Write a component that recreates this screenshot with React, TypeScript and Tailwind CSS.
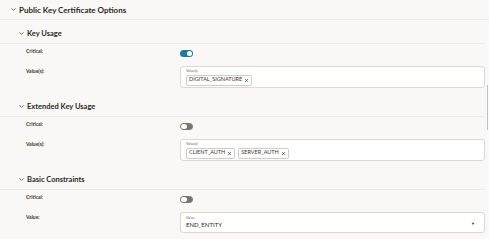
import { ChevronDown, X } from 'lucide-react'

function Toggle({ on }: { on: boolean }) {
  return on ? (
    <div className="w-[13px] h-[7px] rounded-full bg-[#227a9a] flex items-center justify-end pr-[1px]">
      <div className="w-[5px] h-[5px] rounded-full bg-white" />
    </div>
  ) : (
    <div className="w-[13px] h-[7px] rounded-full bg-[#7a7571] border border-[#7a7571] flex items-center">
      <div className="w-[6px] h-[5px] rounded-full bg-white" />
    </div>
  )
}

function Chip({ text }: { text: string }) {
  return (
    <span className="inline-flex items-center gap-[2px] h-[11px] px-[2px] border border-[#cfccc8] rounded-[2px] bg-white text-[5.5px] text-[#3a3632] leading-none">
      {text}
      <X size={5} strokeWidth={3} className="text-[#3a3632]" />
    </span>
  )
}

function Heading({ title }: { title: string }) {
  return (
    <div className="h-[24px] pt-[4px] flex items-center border-b border-[#ece9e6] pl-[18px]">
      <ChevronDown size={7} strokeWidth={2.5} className="text-[#3a3632] mr-[2px]" />
      <span className="text-[7.5px] font-bold text-[#2b2825]">{title}</span>
    </div>
  )
}

function Section({ title, critical, label, children }: { title: string; critical: boolean; label: string; children: React.ReactNode }) {
  return (
    <div>
      <Heading title={title} />
      <div className="pt-[6px] pb-[5px]">
        <div className="flex h-[7px]">
          <div className="w-[180px] shrink-0 pl-[26px] text-[5px] font-bold text-[#3a3632] leading-none -mt-[1px]">Critical:</div>
          <Toggle on={critical} />
        </div>
        <div className="flex mt-[9px]">
          <div className="w-[180px] shrink-0 pl-[26px] text-[5px] font-bold text-[#3a3632] leading-none pt-[3px]">{label}</div>
          {children}
        </div>
      </div>
    </div>
  )
}

export default function App() {
  return (
    <div className="w-[489px] h-[239px] bg-[#f9f8f6] overflow-hidden relative" style={{ fontFamily: 'Lato, "Open Sans", sans-serif' }}>
      <div className="h-[20px] flex items-center border-b border-[#ece9e6] pl-[10px]">
        <ChevronDown size={7} strokeWidth={2.5} className="text-[#3a3632] mr-[2px]" />
        <span className="text-[8px] font-bold text-[#2b2825]">Public Key Certificate Options</span>
      </div>
      <div className="w-[485px]">
        <Section title="Key Usage" critical label="Value(s):">
          <div className="w-[305px] h-[22px] bg-white border border-[#dcd9d5] rounded-[3px] px-[5px] pt-[3px]">
            <div className="text-[3.5px] text-[#6b6560] leading-none mb-[1px]">Value(s)</div>
            <div className="flex gap-[3px]"><Chip text="DIGITAL_SIGNATURE" /></div>
          </div>
        </Section>
        <Section title="Extended Key Usage" critical={false} label="Value(s):">
          <div className="w-[305px] h-[22px] bg-white border border-[#dcd9d5] rounded-[3px] px-[5px] pt-[3px]">
            <div className="text-[3.5px] text-[#6b6560] leading-none mb-[1px]">Value(s)</div>
            <div className="flex gap-[3px]"><Chip text="CLIENT_AUTH" /><Chip text="SERVER_AUTH" /></div>
          </div>
        </Section>
        <Section title="Basic Constraints" critical={false} label="Value:">
          <div className="w-[305px] h-[21px] bg-white border border-[#dcd9d5] rounded-[3px] px-[5px] pt-[4px] flex justify-between">
            <div>
              <div className="text-[3.5px] text-[#6b6560] leading-none mb-[1px]">Value</div>
              <div className="text-[6px] text-[#2b2825] leading-none">END_ENTITY</div>
            </div>
            <div className="pt-[5px] pr-[4px] text-[4px] text-[#2b2825] leading-none">▼</div>
          </div>
        </Section>
      </div>
      <div className="absolute right-[1px] top-[85px] w-[1.5px] h-[45px] bg-[#c4c1bd]" />
    </div>
  )
}
